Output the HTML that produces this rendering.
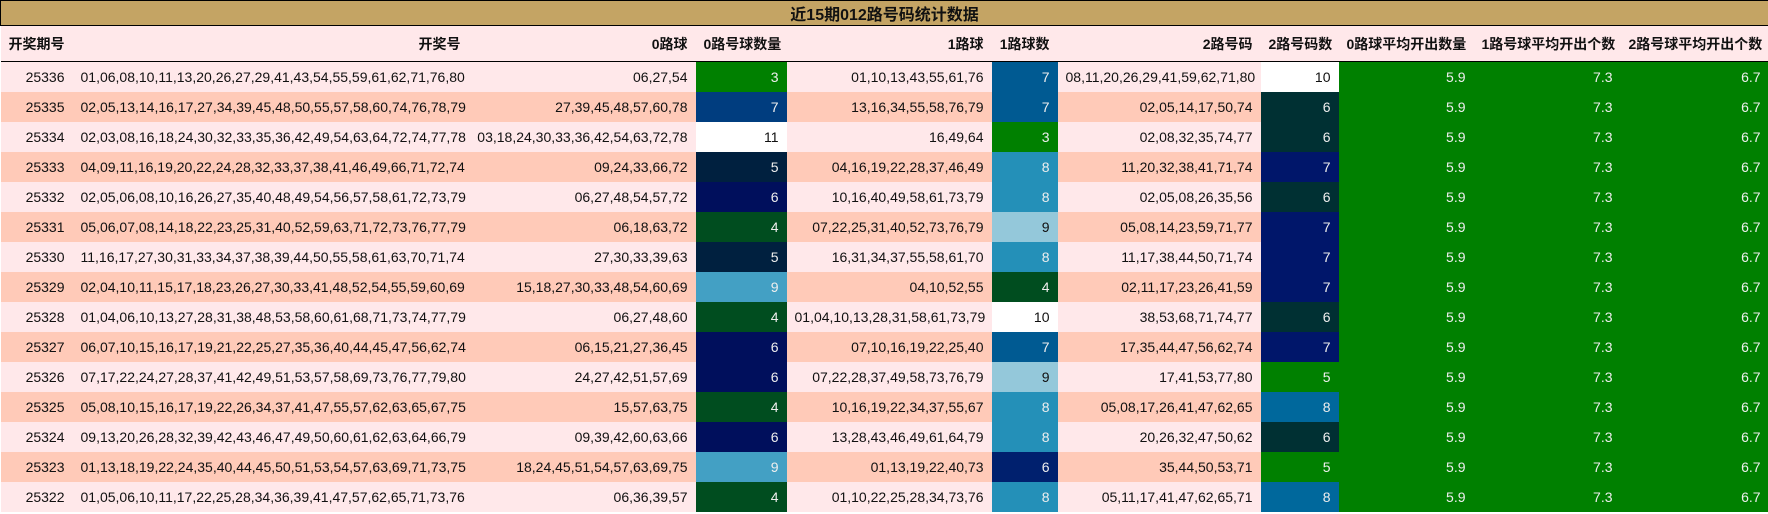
<!DOCTYPE html>
<html><head><meta charset="utf-8"><style>
html,body{margin:0;padding:0;background:#fff;width:1768px;height:514px;overflow:hidden}
table{border-collapse:collapse;table-layout:fixed;width:1768px;font-family:"Liberation Sans","Noto Sans CJK SC",sans-serif;font-size:14px;color:#111}
.t td{height:24px;background:#c4a464;border:1px solid #000;text-align:center;font-weight:bold;font-size:16px;padding:0}
th{height:35px;background:#ffe8ea;font-weight:bold;text-align:right;padding:0 8px;border-bottom:1px solid #000;white-space:nowrap;font-size:14px}
td{height:30px;padding:0 8px;text-align:right;white-space:nowrap}
tr.a td{background:#ffe8ea}tr.b td{background:#ffcab8}
tr td.g{background:#008000;color:#eee}
</style></head><body>
<table>
<colgroup><col style="width:72px"><col style="width:396px"><col style="width:227px"><col style="width:91px"><col style="width:205px"><col style="width:66px"><col style="width:203px"><col style="width:78px"><col style="width:135px"><col style="width:147px"><col style="width:148px"></colgroup>
<tr class="t"><td colspan="11">近15期012路号码统计数据</td></tr>
<tr><th style="text-align:left">开奖期号</th><th>开奖号</th><th>0路球</th><th>0路号球数量</th><th>1路球</th><th>1路球数</th><th>2路号码</th><th>2路号码数</th><th>0路球平均开出数量</th><th>1路号球平均开出个数</th><th>2路号球平均开出个数</th></tr>
<tr class="a"><td>25336</td><td>01,06,08,10,11,13,20,26,27,29,41,43,54,55,59,61,62,71,76,80</td><td>06,27,54</td><td style="background:#008000;color:#eee">3</td><td>01,10,13,43,55,61,76</td><td style="background:#005a92;color:#eee">7</td><td>08,11,20,26,29,41,59,62,71,80</td><td style="background:#fff">10</td><td class="g">5.9</td><td class="g">7.3</td><td class="g">6.7</td></tr>
<tr class="b"><td>25335</td><td>02,05,13,14,16,17,27,34,39,45,48,50,55,57,58,60,74,76,78,79</td><td>27,39,45,48,57,60,78</td><td style="background:#003d7f;color:#eee">7</td><td>13,16,34,55,58,76,79</td><td style="background:#005a92;color:#eee">7</td><td>02,05,14,17,50,74</td><td style="background:#003033;color:#eee">6</td><td class="g">5.9</td><td class="g">7.3</td><td class="g">6.7</td></tr>
<tr class="a"><td>25334</td><td>02,03,08,16,18,24,30,32,33,35,36,42,49,54,63,64,72,74,77,78</td><td>03,18,24,30,33,36,42,54,63,72,78</td><td style="background:#fff">11</td><td>16,49,64</td><td style="background:#008000;color:#eee">3</td><td>02,08,32,35,74,77</td><td style="background:#003033;color:#eee">6</td><td class="g">5.9</td><td class="g">7.3</td><td class="g">6.7</td></tr>
<tr class="b"><td>25333</td><td>04,09,11,16,19,20,22,24,28,32,33,37,38,41,46,49,66,71,72,74</td><td>09,24,33,66,72</td><td style="background:#00203f;color:#eee">5</td><td>04,16,19,22,28,37,46,49</td><td style="background:#2490b8;color:#eee">8</td><td>11,20,32,38,41,71,74</td><td style="background:#00166a;color:#eee">7</td><td class="g">5.9</td><td class="g">7.3</td><td class="g">6.7</td></tr>
<tr class="a"><td>25332</td><td>02,05,06,08,10,16,26,27,35,40,48,49,54,56,57,58,61,72,73,79</td><td>06,27,48,54,57,72</td><td style="background:#000f5c;color:#eee">6</td><td>10,16,40,49,58,61,73,79</td><td style="background:#2490b8;color:#eee">8</td><td>02,05,08,26,35,56</td><td style="background:#003033;color:#eee">6</td><td class="g">5.9</td><td class="g">7.3</td><td class="g">6.7</td></tr>
<tr class="b"><td>25331</td><td>05,06,07,08,14,18,22,23,25,31,40,52,59,63,71,72,73,76,77,79</td><td>06,18,63,72</td><td style="background:#004d1f;color:#eee">4</td><td>07,22,25,31,40,52,73,76,79</td><td style="background:#94c8da">9</td><td>05,08,14,23,59,71,77</td><td style="background:#00166a;color:#eee">7</td><td class="g">5.9</td><td class="g">7.3</td><td class="g">6.7</td></tr>
<tr class="a"><td>25330</td><td>11,16,17,27,30,31,33,34,37,38,39,44,50,55,58,61,63,70,71,74</td><td>27,30,33,39,63</td><td style="background:#00203f;color:#eee">5</td><td>16,31,34,37,55,58,61,70</td><td style="background:#2490b8;color:#eee">8</td><td>11,17,38,44,50,71,74</td><td style="background:#00166a;color:#eee">7</td><td class="g">5.9</td><td class="g">7.3</td><td class="g">6.7</td></tr>
<tr class="b"><td>25329</td><td>02,04,10,11,15,17,18,23,26,27,30,33,41,48,52,54,55,59,60,69</td><td>15,18,27,30,33,48,54,60,69</td><td style="background:#43a0c4;color:#eee">9</td><td>04,10,52,55</td><td style="background:#004d1f;color:#eee">4</td><td>02,11,17,23,26,41,59</td><td style="background:#00166a;color:#eee">7</td><td class="g">5.9</td><td class="g">7.3</td><td class="g">6.7</td></tr>
<tr class="a"><td>25328</td><td>01,04,06,10,13,27,28,31,38,48,53,58,60,61,68,71,73,74,77,79</td><td>06,27,48,60</td><td style="background:#004d1f;color:#eee">4</td><td>01,04,10,13,28,31,58,61,73,79</td><td style="background:#fff">10</td><td>38,53,68,71,74,77</td><td style="background:#003033;color:#eee">6</td><td class="g">5.9</td><td class="g">7.3</td><td class="g">6.7</td></tr>
<tr class="b"><td>25327</td><td>06,07,10,15,16,17,19,21,22,25,27,35,36,40,44,45,47,56,62,74</td><td>06,15,21,27,36,45</td><td style="background:#000f5c;color:#eee">6</td><td>07,10,16,19,22,25,40</td><td style="background:#005a92;color:#eee">7</td><td>17,35,44,47,56,62,74</td><td style="background:#00166a;color:#eee">7</td><td class="g">5.9</td><td class="g">7.3</td><td class="g">6.7</td></tr>
<tr class="a"><td>25326</td><td>07,17,22,24,27,28,37,41,42,49,51,53,57,58,69,73,76,77,79,80</td><td>24,27,42,51,57,69</td><td style="background:#000f5c;color:#eee">6</td><td>07,22,28,37,49,58,73,76,79</td><td style="background:#94c8da">9</td><td>17,41,53,77,80</td><td style="background:#008000;color:#eee">5</td><td class="g">5.9</td><td class="g">7.3</td><td class="g">6.7</td></tr>
<tr class="b"><td>25325</td><td>05,08,10,15,16,17,19,22,26,34,37,41,47,55,57,62,63,65,67,75</td><td>15,57,63,75</td><td style="background:#004d1f;color:#eee">4</td><td>10,16,19,22,34,37,55,67</td><td style="background:#2490b8;color:#eee">8</td><td>05,08,17,26,41,47,62,65</td><td style="background:#00689c;color:#eee">8</td><td class="g">5.9</td><td class="g">7.3</td><td class="g">6.7</td></tr>
<tr class="a"><td>25324</td><td>09,13,20,26,28,32,39,42,43,46,47,49,50,60,61,62,63,64,66,79</td><td>09,39,42,60,63,66</td><td style="background:#000f5c;color:#eee">6</td><td>13,28,43,46,49,61,64,79</td><td style="background:#2490b8;color:#eee">8</td><td>20,26,32,47,50,62</td><td style="background:#003033;color:#eee">6</td><td class="g">5.9</td><td class="g">7.3</td><td class="g">6.7</td></tr>
<tr class="b"><td>25323</td><td>01,13,18,19,22,24,35,40,44,45,50,51,53,54,57,63,69,71,73,75</td><td>18,24,45,51,54,57,63,69,75</td><td style="background:#43a0c4;color:#eee">9</td><td>01,13,19,22,40,73</td><td style="background:#00206e;color:#eee">6</td><td>35,44,50,53,71</td><td style="background:#008000;color:#eee">5</td><td class="g">5.9</td><td class="g">7.3</td><td class="g">6.7</td></tr>
<tr class="a"><td>25322</td><td>01,05,06,10,11,17,22,25,28,34,36,39,41,47,57,62,65,71,73,76</td><td>06,36,39,57</td><td style="background:#004d1f;color:#eee">4</td><td>01,10,22,25,28,34,73,76</td><td style="background:#2490b8;color:#eee">8</td><td>05,11,17,41,47,62,65,71</td><td style="background:#00689c;color:#eee">8</td><td class="g">5.9</td><td class="g">7.3</td><td class="g">6.7</td></tr>
</table>
</body></html>
